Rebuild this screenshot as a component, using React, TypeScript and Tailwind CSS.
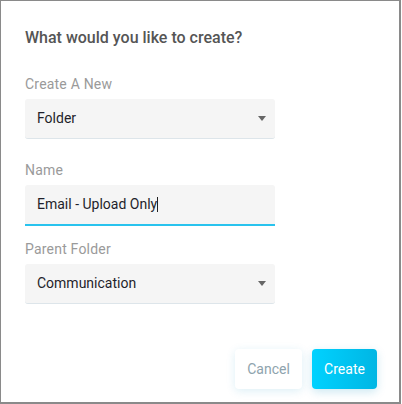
import React from 'react';

function Caret() {
  return (
    <svg width="8" height="5" viewBox="0 0 8 5" className="shrink-0">
      <path d="M0 0h8L4 5z" fill="#666" />
    </svg>
  );
}

function SelectBox({ value }: { value: string }) {
  return (
    <div className="mt-[5px] w-[250px] h-10 rounded-[3px] bg-[#f5f5f5] border-b border-[#dde5ea] flex items-center justify-between pl-3 pr-[9px] text-[14px] text-[#1f1f2b]">
      <span>{value}</span>
      <Caret />
    </div>
  );
}

function Label({ children, className = '' }: { children: React.ReactNode; className?: string }) {
  return <div className={`h-5 leading-5 text-[14px] text-[#9a9a9a] tracking-[0.2px] ${className}`}>{children}</div>;
}

export default function App() {
  return (
    <div
      className="w-[401px] h-[404px] bg-white border border-[#8a8a8a] border-r-2 border-b-2 flex flex-col pl-6"
      style={{ fontFamily: 'Roboto, "Liberation Sans", sans-serif' }}
    >
      <h1 className="mt-[25px] h-6 leading-6 text-[16px] font-medium text-[#555]">What would you like to create?</h1>

      <Label className="mt-6">Create A New</Label>
      <SelectBox value="Folder" />

      <Label className="mt-[21px]">Name</Label>
      <div className="mt-[5px] w-[250px] h-[41px] rounded-t-[3px] bg-[#f5f5f5] border-b-2 border-[#29c3ee] flex items-center pl-3 text-[14px] text-[#1f1f2b]">
        <span>Email - Upload Only</span>
        <span className="inline-block w-px h-[15px] bg-[#222]" />
      </div>

      <Label className="mt-[13px]">Parent Folder</Label>
      <SelectBox value="Communication" />

      <div className="mt-[45px] flex justify-end gap-[10px] pr-[22px]">
        <button className="w-[67px] h-10 rounded bg-white text-[14px] text-[#8ea3ad] shadow-[0_2px_10px_rgba(0,140,190,0.14)]">
          Cancel
        </button>
        <button className="w-[65px] h-10 rounded bg-gradient-to-r from-[#00d2ff] to-[#00b6e4] text-[14px] text-white shadow-[0_3px_10px_rgba(0,140,190,0.2)]">
          Create
        </button>
      </div>
    </div>
  );
}
